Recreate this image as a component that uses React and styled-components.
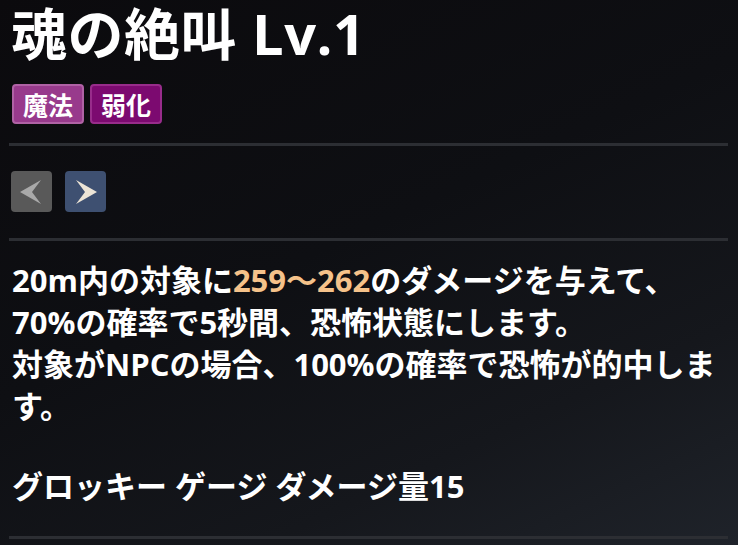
import React from "react";
import styled, { createGlobalStyle } from "styled-components";

const Global = createGlobalStyle`
  html, body { margin: 0; padding: 0; }
  body {
    width: 738px;
    height: 545px;
    overflow: hidden;
    background: linear-gradient(155deg, #0b0a0d 0%, #0e0f13 45%, #15171c 75%, #1f232a 100%);
    font-family: "Open Sans", "Noto Sans CJK JP", sans-serif;
    color: #ffffff;
  }
`;

const Panel = styled.div`
  display: flex;
  flex-direction: column;
  padding: 0 10px 0 9px;
  height: 545px;
  box-sizing: border-box;
`;

const Title = styled.h1`
  margin: 0;
  padding: 0 0 0 2px;
  font-size: 56px;
  font-weight: 700;
  line-height: 66px;
  letter-spacing: 0.5px;
  color: #ffffff;
  white-space: nowrap;
`;

const TagRow = styled.div`
  display: flex;
  gap: 6px;
  padding: 18px 0 0 3px;
`;

const Tag = styled.span`
  display: flex;
  align-items: center;
  justify-content: center;
  height: 40px;
  padding: 0 9px;
  box-sizing: border-box;
  border-radius: 4px;
  font-size: 25px;
  font-weight: 700;
  color: #ffffff;
  background: ${(p) => (p.$tone === "light" ? "#983a8c" : "#7c0a70")};
  border: 2px solid ${(p) => (p.$tone === "light" ? "#b062a5" : "#982c8b")};
`;

const Divider = styled.div`
  flex-shrink: 0;
  height: 3px;
  background: #2c2e33;
  margin-top: ${(p) => p.$top}px;
`;

const NavRow = styled.div`
  display: flex;
  gap: 13px;
  padding: 25px 0 0 2px;
`;

const NavButton = styled.div`
  width: 41px;
  height: 41px;
  border-radius: 4px;
  background: ${(p) => (p.$active ? "#3e5071" : "#595959")};
  display: flex;
  align-items: center;
  justify-content: center;
`;

const Body = styled.div`
  padding: 18px 0 0 3px;
  font-size: 31px;
  font-weight: 700;
  line-height: 42px;
  width: 716px;
  box-sizing: border-box;
`;

const Para = styled.p`
  margin: 0;
`;

const Num = styled.span`
  color: #f5c28a;
`;

const Spacer = styled.div`
  height: 38px;
`;

const Arrow = ({ dir }) => (
  <svg width="41" height="41" viewBox="0 0 41 41">
    {dir === "left" ? (
      <polygon points="30,9 9,21 30,33 21,21" fill="#a9a9a9" />
    ) : (
      <polygon points="11,9 32,21 11,33 20,21" fill="#ece4d6" />
    )}
  </svg>
);

export default function App() {
  return (
    <>
      <Global />
      <Panel>
        <Title>魂の絶叫 Lv.1</Title>
        <TagRow>
          <Tag $tone="light">魔法</Tag>
          <Tag $tone="dark">弱化</Tag>
        </TagRow>
        <Divider $top={19} />
        <NavRow>
          <NavButton>
            <Arrow dir="left" />
          </NavButton>
          <NavButton $active>
            <Arrow dir="right" />
          </NavButton>
        </NavRow>
        <Divider $top={26} />
        <Body>
          <Para>
            20m内の対象に<Num>259〜262</Num>のダメージを与えて、
          </Para>
          <Para>70%の確率で5秒間、恐怖状態にします。</Para>
          <Para>対象がNPCの場合、100%の確率で恐怖が的中します。</Para>
          <Spacer />
          <Para>グロッキー ゲージ ダメージ量15</Para>
        </Body>
        <Divider $top={29} />
      </Panel>
    </>
  );
}
